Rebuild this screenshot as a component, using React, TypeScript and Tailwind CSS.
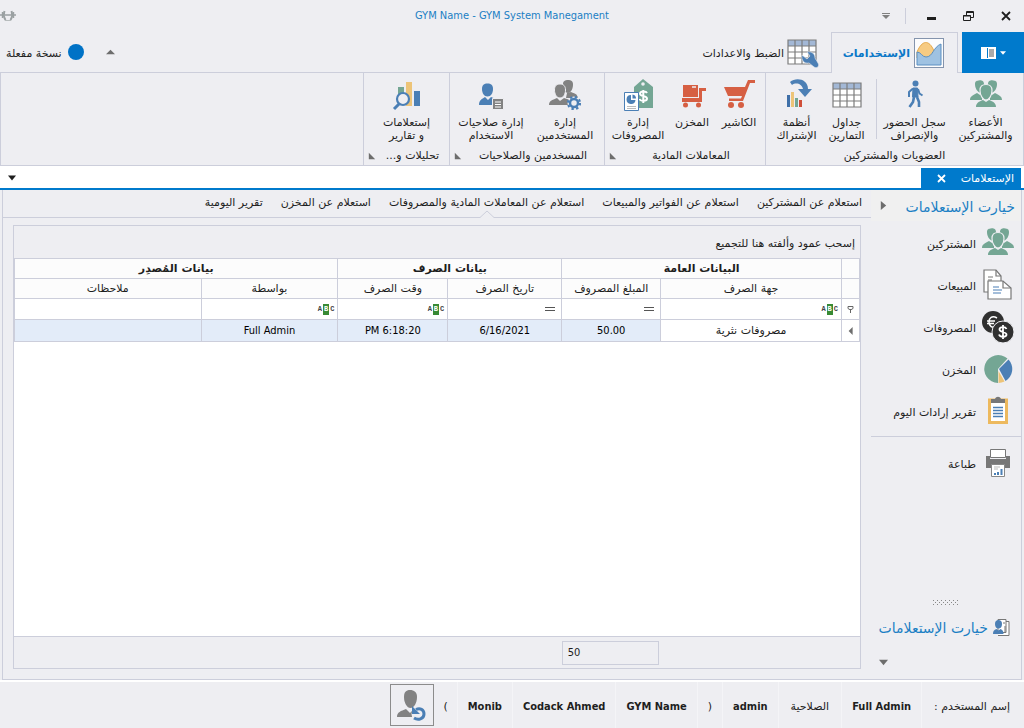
import type { ReactNode } from "react"

function MembersIcon() {
  return (
    <svg width="32" height="32" viewBox="0 0 32 32" fill="#74a694">
      <path d="M5 5c0-3 2-3.500 4-3.500 1-.6 5-.5 5 3.500v6l-3 3C7 13 5 9 5 5z" />
      <path d="M27 5c0-3-2-3.500-4-3.500-1-.6-5-.5-5 3.500v6l3 3c4-1 6-5 6-9z" />
      <path d="M0 21c0-4 3-4.500 7-7l3 2 2-1v6z" />
      <path d="M32 21c0-4-3-4.500-7-7l-3 2-2-1v6z" />
      <path d="M16 5.500c4 0 6 2 6 6 0 5-3 9.500-6 9.500s-6-4.500-6-9.500c0-4 2-6 6-6z" stroke="#eeeef2" strokeWidth="1.200" />
      <path d="M6 28c0-4 3-5.500 7-7l3 2 3-2c4 1.500 7 3 7 7z" />
    </svg>
  )
}

function WalkIcon() {
  return (
    <svg width="32" height="32" viewBox="0 0 32 32" fill="none" stroke="#4b7fb5" strokeLinejoin="round">
      <circle cx="16.500" cy="4.500" r="3" fill="#4b7fb5" stroke="none" />
      <path d="M14 9h4.500l.5 9h-5.500z" fill="#4b7fb5" strokeWidth="1" />
      <path d="M14 9.500l-4 3.500v5M19 10l1.500 4.500 3 2" strokeWidth="2" />
      <path d="M15 18l-1 5-3.500 5M18 18l2 5v5" strokeWidth="2.600" />
    </svg>
  )
}

function GridIcon() {
  return (
    <svg width="30" height="26" viewBox="0 0 30 26">
      <rect x="1" y="1" width="28" height="24" fill="#fff" />
      <rect x="1" y="1" width="28" height="6" fill="#a3b8d6" />
      <path d="M1 1h28v24H1zM1 7h28M1 13h28M1 19h28M8 1v24M15 1v24M22 1v24" fill="none" stroke="#7c7c7c" strokeWidth="1.200" />
    </svg>
  )
}

function SubscriptionIcon() {
  return (
    <svg width="32" height="32" viewBox="0 0 32 32">
      <path d="M9 3C15-2 27 0 27 10h4l-7 8-7-8h5C21 5 15 3 11 6z" fill="#4b7fb5" />
      <path d="M6 16h3v12H6z" fill="#3f6fa8" />
      <path d="M10 13h3v15h-3z" fill="#edc478" />
      <path d="M14 19h3v9h-3z" fill="#74a694" />
      <path d="M18 21h3v7h-3z" fill="#d04f39" />
    </svg>
  )
}

function CartIcon() {
  return (
    <svg width="32" height="32" viewBox="0 0 32 32" fill="#d65f43">
      <path d="M1 8h21l3-7h7v3h-5l-7 18H6v-2.500h12l1-2.500H5z" />
      <circle cx="8" cy="26" r="3" />
      <circle cx="18" cy="26" r="3" />
    </svg>
  )
}

function StoreIcon() {
  return (
    <svg width="32" height="32" viewBox="0 0 32 32" fill="#d65f43">
      <path d="M7 6h15v12H7z" />
      <path d="M16 8h4" fill="none" stroke="#eeeef2" strokeWidth="1.500" />
      <path d="M6 19h17V9h7v3h-4v11H6z" />
      <circle cx="9.500" cy="26" r="2.500" />
      <circle cx="22.500" cy="26" r="2.500" />
    </svg>
  )
}

function ExpensesIcon() {
  return (
    <svg width="32" height="32" viewBox="0 0 32 32">
      <path d="M12 8l9-8 10 8v21H12z" fill="#74a694" />
      <circle cx="21" cy="5" r="1.800" fill="#eeeef2" />
      <path d="M25 14c-1-2-7-2-7 .8 0 3 7 1.700 7 4.700 0 3-6.500 3-7.500.5M21.300 11v13" fill="none" stroke="#fff" strokeWidth="2" />
      <path d="M2.500 13.500h14v18h-14z" fill="#fff" stroke="#4b7fb5" />
      <path d="M9 16a4.500 4.500 0 1 0 4.500 5H9z" fill="#4b7fb5" />
      <path d="M10.500 15.500a4 4 0 0 1 3.500 4h-3.500z" fill="#4b7fb5" />
      <path d="M5 27.500h9M5 29.500h9" stroke="#bbb" />
    </svg>
  )
}

function UsersIcon() {
  return (
    <svg width="32" height="32" viewBox="0 0 32 32" fill="#828282">
      <path d="M14 5c0-3 2-4 5-4s5 1 5 4.500c0 4-2 8.500-5 8.500s-5-5-5-9z" />
      <path d="M18 14l4-1c5 2 6 2 7 6H17z" />
      <path d="M5.500 11c0-4 2-6 5.500-6s5.500 2 5.500 6-2 8-5.500 8-5.500-4-5.500-8z" stroke="#eeeef2" />
      <path d="M0 26c0-4 3-5 8-7l3 3 4-3 6 2v5z" />
      <circle cx="25" cy="24" r="6.500" fill="#eeeef2" />
      <circle cx="25" cy="24" r="4" fill="none" stroke="#4b7fb5" strokeWidth="2.500" />
      <circle cx="25" cy="24" r="6" fill="none" stroke="#4b7fb5" strokeWidth="2.200" strokeDasharray="2.360 2.350" />
    </svg>
  )
}

function RolesIcon() {
  return (
    <svg width="32" height="32" viewBox="0 0 32 32" fill="#4b7fb5">
      <path d="M7 10c0-4 2-5.500 5.500-5.500S18 6 18 10s-2 7.500-5.500 7.500S7 14 7 10z" />
      <path d="M4 26c0-5 3-6 6-8l3 3 3-3 5 2v6z" />
      <path d="M17.500 19.500h11v11h-11z" fill="#828282" stroke="#eeeef2" />
      <path d="M20 23h6M20 25.500h6M20 28h6" stroke="#fff" />
    </svg>
  )
}

function QueriesIcon() {
  return (
    <svg width="32" height="32" viewBox="0 0 32 32">
      <path d="M7 8h6v10H7z" fill="#74a694" />
      <path d="M15 3h6v24h-6z" fill="#edc478" />
      <path d="M23 12h6v15h-6z" fill="#4b7fb5" />
      <circle cx="12" cy="20" r="6" fill="#eeeef2" stroke="#4b7fb5" strokeWidth="2.200" />
      <path d="M8 25l-5 5" stroke="#4b7fb5" strokeWidth="3" />
    </svg>
  )
}

function ChartIcon() {
  return (
    <svg width="30" height="30" viewBox="0 0 30 30">
      <rect x=".5" y=".5" width="29" height="29" fill="#fcfcfd" stroke="#8494ad" />
      <path d="M3 14C8 2 15 1 20 13l2 7H3z" fill="#f7cb82" stroke="#e5a94b" />
      <path d="M3 14c4 0 5 5 9 5 7 0 7-10 15-13v21H3z" fill="#9fc2e2" stroke="#5a8fc2" />
    </svg>
  )
}

function SettingsIcon() {
  return (
    <svg width="32" height="30" viewBox="0 0 32 30">
      <path d="M1 1h28v24H1z" fill="#fff" />
      <path d="M1 1h28v6H1z" fill="#a3b8d6" />
      <path d="M1 1h28v24H1zM1 7h28M1 13h28M1 19h28M8 1v24M15 1v24M22 1v24" fill="none" stroke="#7c7c7c" strokeWidth="1.200" />
      <path d="M15 16l5 4 3-3-3-4c5-1 8 2 8 6l3 5c2 3-1 6-4 4l-5-4c-5 1-8-3-7-8z" fill="#4b7fb5" stroke="#eeeef2" strokeWidth=".6" />
    </svg>
  )
}

function SalesIcon() {
  return (
    <svg width="32" height="32" viewBox="0 0 32 32" fill="#fff" stroke="#777" strokeWidth="1.200">
      <path d="M2 1h12l5 6v16H2z" />
      <path d="M14 1v6h5M6 8h5M6 11h4" fill="none" />
      <path d="M6 12h15l8 7v11H6z" />
      <path d="M21 12v7h8" fill="none" />
      <path d="M11 18h6M11 21h9M11 24h8" stroke="#4b7fb5" />
    </svg>
  )
}

function CoinsIcon() {
  return (
    <svg width="32" height="32" viewBox="0 0 32 32">
      <circle cx="11" cy="11" r="11" fill="#303030" />
      <path d="M15 7c-5-3-8 0-8 4s3 7 8 4M5 10h8M5 12.500h7" fill="none" stroke="#fff" strokeWidth="1.500" />
      <circle cx="21" cy="21" r="11" fill="#303030" stroke="#eeeef2" />
      <path d="M24.500 18c-1-2.500-7-2.500-7 .5s7 2 7 5-6.500 3-7.500 0M21 14v14" fill="none" stroke="#fff" strokeWidth="1.800" />
    </svg>
  )
}

function PieIcon() {
  return (
    <svg width="32" height="32" viewBox="0 0 32 32">
      <path d="M16 16V30A14 14 0 1 1 25.500 5.500z" fill="#74a694" />
      <path d="M17 16l9.500-9.500A14 14 0 0 1 23.500 28z" fill="#4b7fb5" />
      <path d="M16.500 18l6 10.500a14 14 0 0 1-6 1.500z" fill="#edc478" />
    </svg>
  )
}

function ClipboardIcon() {
  return (
    <svg width="32" height="32" viewBox="0 0 32 32">
      <path d="M7.500 5h17v22.500h-17z" fill="#fff" stroke="#edb95e" strokeWidth="3" />
      <path d="M9 4h4c1-3 5-3 6 0h4v4H9z" fill="#777" />
      <path d="M11 12.500h10M11 15.500h10M11 18.500h10M11 21.500h10" stroke="#4b7fb5" strokeWidth="1.400" />
    </svg>
  )
}

function PrinterIcon() {
  return (
    <svg width="32" height="32" viewBox="0 0 32 32">
      <path d="M4 9h4v3h16V9h4v12H4z" fill="#777" />
      <path d="M8.500 2.500h15v8h-15z" fill="#fff" stroke="#777" />
      <path d="M9.500 17.500h13v12h-13z" fill="#fff" stroke="#888" />
      <path d="M12 20h6M12 22h4" stroke="#bbb" />
      <path d="M12 28v-2h2v2zM15 28v-3h2v3zM18.500 28v-6h2v6z" fill="#4b7fb5" />
    </svg>
  )
}

function NavGroupIcon() {
  return (
    <svg width="17" height="17" viewBox="0 0 17 17">
      <path d="M5 .5h8v13H5zM13 2.500h3v14H5" fill="#fff" stroke="#777" />
      <path d="M10 4h2M11 8h2M11 10h2M11 12h2" stroke="#777" />
      <path d="M2 5c0-3 1.500-4 3.500-4S9 2 9 5 7.500 9.500 5.500 9.500 2 8 2 5zM0 15c0-3 1-4 3.500-5l2 1.500 2-1.500c2 1 3 2 3 5z" fill="#4b7fb5" />
    </svg>
  )
}

function SwitchUserIcon() {
  return (
    <svg width="32" height="34" viewBox="0 0 32 34">
      <path d="M8 9c0-5 2-7 6-7s7 2 7 7c0 6-3 11-6.500 11S8 15 8 9z" fill="#828282" />
      <path d="M1 29c0-5 4-6 9-8l4 4 4-4 6 2v6z" fill="#828282" />
      <circle cx="23" cy="26" r="7.500" fill="#eeeef2" />
      <path d="M20 21.500c4-2 8 0 8 4.500 0 5-6 6.500-10 4" fill="none" stroke="#4b7fb5" strokeWidth="3" />
      <path d="M16 18v8h8z" fill="#4b7fb5" />
    </svg>
  )
}

function DumbbellIcon() {
  return (
    <svg width="16" height="12" viewBox="0 0 16 12" fill="none" stroke="#9aa0a2">
      <path d="M0 5h2M14 5h2M5 5h6" strokeWidth="1.500" />
      <path d="M2.500 2v6M13.500 2v6" strokeWidth="1.400" />
      <path d="M4.500 1c-1 3-1 6 1 9M11.500 1c1 3 1 6-1 9" strokeWidth="2" />
      <path d="M5 10.500h6" stroke="#b7bcbd" />
    </svg>
  )
}

function Triangle({ className, points, size = 9 }: { className?: string; points: string; size?: number }) {
  return (
    <svg width={size} height={size} viewBox="0 0 10 10" className={className} fill="currentColor">
      <polygon points={points} />
    </svg>
  )
}

const DOWN = "0,2 10,2 5,8"
const UP = "0,7 10,7 5,2"
const LEFT = "2,5 7,0 7,10"
const RIGHT = "2,0 8,5 2,10"
const CORNER = "1,1 1,9 9,9"

function TitleBar() {
  return (
    <header className="grid h-8 grid-cols-[1fr_auto_1fr] items-center">
      <div className="flex items-center">
        <button aria-label="إغلاق" className="flex h-8 w-9 items-center justify-center">
          <svg width="10" height="10" viewBox="0 0 10 10"><path d="M1 1l8 8M9 1l-8 8" stroke="#1e1e1e" strokeWidth="1.800" /></svg>
        </button>
        <button aria-label="استعادة" className="flex h-8 w-10 items-center justify-center">
          <svg width="11" height="10" viewBox="0 0 11 10" fill="none" stroke="#1e1e1e"><path d="M3.500 4V.5h7v6H8M3 1.500h8M.5 4.500h7v5h-7zM0 5h8" /></svg>
        </button>
        <button aria-label="تصغير" className="flex h-8 w-8 items-center justify-center">
          <svg width="10" height="10" viewBox="0 0 10 10"><path d="M0 6h9v3H0z" fill="#1e1e1e" /></svg>
        </button>
        <span className="ms-[10px] h-4 w-px bg-[#cccedb]" />
        <button aria-label="تخصيص" className="ms-[15px] flex h-8 items-center text-[#808080]">
          <svg width="8" height="8" viewBox="0 0 8 8" fill="currentColor"><path d="M0 1h8v1H0zM0 3h8L4 7z" /></svg>
        </button>
      </div>
      <h1 dir="ltr" className="font-['DejaVu_Sans_Condensed',sans-serif] text-[#1b7fc4]">GYM Name - GYM System Manegament</h1>
      <div className="flex justify-end"><DumbbellIcon /></div>
    </header>
  )
}

function RibbonTabs() {
  return (
    <nav className="flex h-[41px]">
      <button aria-label="القائمة" className="flex w-[62px] items-center justify-center gap-1 bg-[#007acc] text-white">
        <Triangle points={DOWN} size={6} />
        <svg width="15" height="12" viewBox="0 0 15 12"><path d="M0 0h15v12H0z" fill="#fff" /><path d="M6.500 1v10" stroke="#007acc" /><path d="M8 3h5M8 5h5M8 7h5M8 9h5" stroke="#555" /></svg>
      </button>
      <span className="w-1 border-b border-[#cccedb]" />
      <button className="flex w-[127px] items-center gap-1 border-x border-t border-[#cccedb] ps-[13px] font-bold whitespace-nowrap text-[#0a78c8]">
        <ChartIcon />
        <span className="pt-[2px]">الإستخدامات</span>
      </button>
      <div className="flex flex-1 items-center border-b border-[#cccedb] ps-3">
        <button className="flex items-center gap-[3px] whitespace-nowrap">
          <span className="pt-1"><SettingsIcon /></span>
          <span className="pt-[3px]">الضبط والاعدادات</span>
        </button>
        <button aria-label="طي الشريط" className="ms-auto text-[#6d6d6d]"><Triangle points={UP} /></button>
        <span className="ms-[22px] size-4 rounded-full bg-[#0072c6]" />
        <span className="ms-[6px] me-[6px] pt-[3px]">نسخة مفعلة</span>
      </div>
    </nav>
  )
}

function RibbonButton({ icon, lines, className }: { icon: ReactNode; lines: string[]; className: string }) {
  return (
    <button className={`flex shrink-0 flex-col items-center whitespace-nowrap leading-[13px] ${className}`}>
      <span className="mb-[5px] flex h-8 items-center">{icon}</span>
      {lines.map((line) => <span key={line}>{line}</span>)}
    </button>
  )
}

function RibbonGroup({ title, corner, className, children }: { title: string; corner?: boolean; className: string; children: ReactNode }) {
  return (
    <section className={`flex flex-col border-e border-[#cccedb] ${className}`}>
      <div className="flex flex-1 justify-center pt-[6px]">{children}</div>
      <div className="flex h-[18px] items-center">
        <h2 className="flex-1 text-center whitespace-nowrap">{title}</h2>
        {corner && <Triangle points={CORNER} size={8} className="me-1 text-[#6d6d6d]" />}
      </div>
    </section>
  )
}

function Ribbon() {
  return (
    <div className="flex h-[93px] border-x border-b border-[#cccedb]">
      <RibbonGroup title="العضويات والمشتركين" className="w-[258px]">
        <RibbonButton icon={<MembersIcon />} lines={["الأعضاء", "والمشتركين"]} className="w-[72px]" />
        <RibbonButton icon={<WalkIcon />} lines={["سجل الحضور", "والإنصراف"]} className="w-[70px]" />
        <span className="me-1 ms-[3px] h-[60px] w-px bg-[#cccedb]" />
        <RibbonButton icon={<GridIcon />} lines={["جداول", "التمارين"]} className="w-[50px]" />
        <RibbonButton icon={<SubscriptionIcon />} lines={["أنظمة", "الإشتراك"]} className="me-1 w-[50px]" />
      </RibbonGroup>
      <RibbonGroup title="المعاملات المادية" corner className="w-[161px]">
        <RibbonButton icon={<CartIcon />} lines={["الكاشير"]} className="w-[46px]" />
        <RibbonButton icon={<StoreIcon />} lines={["المخزن"]} className="w-[48px]" />
        <RibbonButton icon={<ExpensesIcon />} lines={["إدارة", "المصروفات"]} className="w-[60px]" />
      </RibbonGroup>
      <RibbonGroup title="المسخدمين والصلاحيات" corner className="w-[155px]">
        <RibbonButton icon={<UsersIcon />} lines={["إدارة", "المستخدمين"]} className="w-[72px]" />
        <RibbonButton icon={<RolesIcon />} lines={["إدارة صلاحيات", "الاستخدام"]} className="w-[76px]" />
      </RibbonGroup>
      <RibbonGroup title="تحليلات و..." corner className="w-[86px]">
        <RibbonButton icon={<QueriesIcon />} lines={["إستعلامات", "و تقارير"]} className="w-[72px]" />
      </RibbonGroup>
    </div>
  )
}

function DocumentTabs() {
  return (
    <div className="flex h-6 items-center border-b-2 border-[#007acc] bg-white pt-[2px]">
      <div className="ms-[3px] flex h-full w-[100px] items-center justify-between bg-[#007acc] ps-[7px] pe-4 text-white">
        <span className="pt-[2px]">الإستعلامات</span>
        <button aria-label="إغلاق التبويب">
          <svg width="9" height="9" viewBox="0 0 9 9"><path d="M1 1l7 7M8 1L1 8" stroke="#fff" strokeWidth="1.800" /></svg>
        </button>
      </div>
      <button aria-label="قائمة التبويبات" className="ms-auto me-2 text-[#1e1e1e]"><Triangle points={DOWN} size={8} /></button>
    </div>
  )
}

const navItems = [
  { label: "المشتركين", icon: <MembersIcon /> },
  { label: "المبيعات", icon: <SalesIcon /> },
  { label: "المصروفات", icon: <CoinsIcon /> },
  { label: "المخزن", icon: <PieIcon /> },
  { label: "تقرير إرادات اليوم", icon: <ClipboardIcon /> },
]

function NavItem({ label, icon }: { label: string; icon: ReactNode }) {
  return (
    <a href="#" className="flex h-[42px] items-center gap-[6px] ps-[7px] pt-[2px]">
      {icon}
      <span className="pt-[3px]">{label}</span>
    </a>
  )
}

function Sidebar() {
  return (
    <aside className="flex w-[150px] shrink-0 flex-col">
      <div className="flex h-[31px] items-center justify-between bg-[#f0f0f0] ps-[6px] pe-2">
        <h2 className="pt-[2px] text-[14px] whitespace-nowrap text-[#1b7fc4]">خيارت الإستعلامات</h2>
        <button aria-label="طي القائمة" className="text-[#6d6d6d]"><Triangle points={RIGHT} /></button>
      </div>
      <nav className="flex flex-col">
        {navItems.map((item) => <NavItem key={item.label} {...item} />)}
        <hr className="mt-[5px] mb-1 border-[#cccedb]" />
        <NavItem label="طباعة" icon={<PrinterIcon />} />
      </nav>
      <div className="mt-auto flex flex-col">
        <svg width="26" height="6" viewBox="0 0 26 6" className="self-center">
          <path d="M0 .5h26M2 2.500h24M0 4.500h26" stroke="#888" strokeDasharray="1 3" />
        </svg>
        <button className="mt-2 flex items-center gap-[5px] ps-[11px] text-[14px] leading-[24px] whitespace-nowrap text-[#1b7fc4]">
          <NavGroupIcon />
          <span className="pt-[2px]">خيارت الإستعلامات</span>
        </button>
        <button aria-label="خيارات إضافية" className="mt-[18px] me-2 mb-3 self-end text-[#6d6d6d]"><Triangle points={DOWN} /></button>
      </div>
    </aside>
  )
}

const reportTabs = [
  "استعلام عن المشتركين",
  "استعلام عن الفواتير والمبيعات",
  "استعلام عن المعاملات المادية والمصروفات",
  "استعلام عن المخزن",
  "تقرير اليومية",
]

function ReportTabs() {
  return (
    <nav className="flex h-7 gap-[18px] border-b border-[#cccedb] ps-[9px] whitespace-nowrap">
      {reportTabs.map((tab, i) => (
        <button key={tab} className="relative pb-[2px]">
          {tab}
          {i === 2 && (
            <svg width="14" height="8" viewBox="0 0 14 8" className="absolute -bottom-px left-1/2 -translate-x-1/2">
              <path d="M0 7.500L7 1l7 6.500V8H0z" fill="#eeeef2" />
              <path d="M0 7.500L7 1l7 6.500" fill="none" stroke="#cccedb" />
            </svg>
          )}
        </button>
      ))}
    </nav>
  )
}

function AbcIcon() {
  return (
    <span dir="ltr" className="flex items-center font-['Liberation_Mono',monospace] text-[7px] leading-[11px] font-bold text-[#444]">
      A<span className="mx-px bg-[#388a34] px-px text-white">B</span>C
    </span>
  )
}

function EqualsIcon() {
  return (
    <svg width="10" height="5" viewBox="0 0 10 5" className="ms-[3px]"><path d="M0 .5h10M0 3.500h10" stroke="#555" /></svg>
  )
}

const columns = [
  { title: "جهة الصرف", filter: "abc", value: "مصروفات نثرية" },
  { title: "المبلغ المصروف", filter: "eq", value: "50.00" },
  { title: "تاريخ الصرف", filter: "eq", value: "6/16/2021" },
  { title: "وقت الصرف", filter: "abc", value: "6:18:20 PM" },
  { title: "بواسطة", filter: "abc", value: "Full Admin" },
  { title: "ملاحظات", filter: "", value: "" },
]

function ExpensesTable() {
  return (
    <table className="w-full table-fixed border-collapse text-center [&_td]:border [&_td]:border-[#cccedb] [&_td]:p-0 [&_th]:border [&_th]:border-[#cccedb] [&_th]:p-0">
      <colgroup>
        <col className="w-[18px]" />
        <col className="w-[21.400%]" />
        <col className="w-[11.700%]" />
        <col className="w-[13.500%]" />
        <col className="w-[13%]" />
        <col className="w-[16.200%]" />
        <col />
      </colgroup>
      <thead className="bg-[#fcfcfc]">
        <tr className="h-5">
          <th />
          <th colSpan={2}>البيانات العامة</th>
          <th colSpan={2}>بيانات الصرف</th>
          <th colSpan={2}>بيانات المُصدِر</th>
        </tr>
        <tr className="h-5">
          <th />
          {columns.map((col) => <th key={col.title} className="font-normal">{col.title}</th>)}
        </tr>
      </thead>
      <tbody className="bg-white">
        <tr className="h-[21px]">
          <td>
            <svg width="7" height="8" viewBox="0 0 7 8" className="mx-auto" fill="none" stroke="#666"><path d="M1 1.500h5v2L3.500 5 1 3.500zM3.500 4v4" /></svg>
          </td>
          {columns.map((col) => (
            <td key={col.title}>
              <div className="flex items-center px-[3px]">
                {col.filter === "abc" && <AbcIcon />}
                {col.filter === "eq" && <EqualsIcon />}
                <input aria-label={col.title} className="h-4 w-0 min-w-0 flex-1 bg-transparent outline-none" />
              </div>
            </td>
          ))}
        </tr>
        <tr className="h-[22px]">
          <td><Triangle points={LEFT} size={8} className="mx-auto text-[#6d6d6d]" /></td>
          {columns.map((col, i) => (
            <td key={col.title} className={i === 0 ? "" : "bg-[#e3ecf9] font-['DejaVu_Sans_Condensed',sans-serif] text-black"}>{col.value}</td>
          ))}
        </tr>
      </tbody>
    </table>
  )
}

function Main() {
  return (
    <main className="flex min-w-0 flex-1 flex-col">
      <ReportTabs />
      <div className="mx-[10px] mt-[7px] mb-[10px] flex flex-1 flex-col border border-[#cccedb]">
        <p className="h-8 ps-[5px] leading-[36px]">إسحب عمود وألفته هنا للتجميع</p>
        <div className="flex-1 bg-white"><ExpensesTable /></div>
        <div className="flex h-8 items-center border-t border-[#cccedb]">
          <input readOnly aria-label="الإجمالي" value="50" className="ms-[23.800%] h-6 w-[97px] border border-[#cccedb] px-[5px] text-left font-['DejaVu_Sans_Condensed',sans-serif]" />
        </div>
      </div>
    </main>
  )
}

function StatusItem({ bold, className = "px-3", children }: { bold?: boolean; className?: string; children: ReactNode }) {
  return (
    <span className={`flex h-full items-center border-e border-[#f4f4f7] pt-1 ${bold ? "px-[10px] font-['DejaVu_Sans_Condensed',sans-serif] font-bold" : className}`}>
      {children}
    </span>
  )
}

function StatusBar() {
  return (
    <footer className="flex h-[46px] items-center ps-[2px] whitespace-nowrap">
      <StatusItem>إسم المستخدم :</StatusItem>
      <StatusItem bold>Full Admin</StatusItem>
      <StatusItem>الصلاحية</StatusItem>
      <StatusItem bold>admin</StatusItem>
      <StatusItem className="px-[10px]">(</StatusItem>
      <StatusItem bold>GYM Name</StatusItem>
      <StatusItem bold>Codack Ahmed</StatusItem>
      <StatusItem bold>Monib</StatusItem>
      <span className="px-[9px] pt-1">)</span>
      <button aria-label="تبديل المستخدم" className="flex h-[42px] w-11 items-center justify-center border border-[#8c8c8c]">
        <SwitchUserIcon />
      </button>
    </footer>
  )
}

function App() {
  return (
    <div dir="rtl" className="flex min-h-screen flex-col bg-[#eeeef2] font-['DejaVu_Sans',sans-serif] text-[11px] leading-[14px] text-[#1e1e1e]">
      <TitleBar />
      <RibbonTabs />
      <Ribbon />
      <DocumentTabs />
      <div className="mx-[2px] flex flex-1 border-x border-b border-[#cccedb]">
        <Sidebar />
        <Main />
      </div>
      <div className="h-[2px] bg-white" />
      <StatusBar />
    </div>
  )
}

export default App
